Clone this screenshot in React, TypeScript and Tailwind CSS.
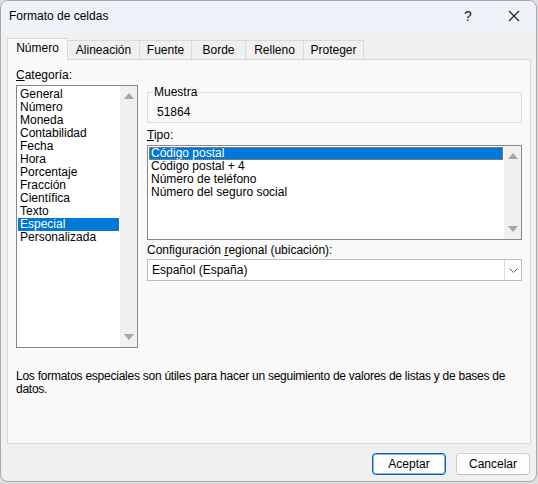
import React from "react";

const CATEGORIES = [
  "General", "Número", "Moneda", "Contabilidad", "Fecha", "Hora",
  "Porcentaje", "Fracción", "Científica", "Texto", "Especial", "Personalizada",
];

const TIPOS = [
  "Código postal",
  "Código postal + 4",
  "Número de teléfono",
  "Número del seguro social",
];

const TABS = [
  { name: "Número", w: "w-[61px]" },
  { name: "Alineación", w: "w-[73px]" },
  { name: "Fuente", w: "w-[53px]" },
  { name: "Borde", w: "w-[55px]" },
  { name: "Relleno", w: "w-[59px]" },
  { name: "Proteger", w: "w-[61px]" },
];

function Arrow({ down }: { down?: boolean }) {
  return (
    <svg width="10" height="6" viewBox="0 0 10 6">
      {down ? (
        <polygon points="0,0 10,0 5,6" fill="#a6a6a6" />
      ) : (
        <polygon points="0,6 10,6 5,0" fill="#a6a6a6" />
      )}
    </svg>
  );
}

function ScrollTrack() {
  return (
    <div className="w-[17px] bg-[#f0f0f0] flex flex-col items-center justify-between py-[7px]">
      <Arrow />
      <Arrow down />
    </div>
  );
}

export default function App() {
  return (
    <div className="w-[538px] h-[484px] bg-[#dedede] font-['Liberation_Sans',Arial,sans-serif] text-[12px] text-black leading-[13px]">
      <div className="w-[537px] h-[482px] bg-[#f0f0f0] border border-[#a8a8a8] rounded-[8px] overflow-hidden flex flex-col">
        {/* title bar */}
        <div className="h-[30px] bg-[#eef2f9] flex items-center pl-[8px] shrink-0">
          <span className="flex-1 text-[12px] pt-[1px]">Formato de celdas</span>
          <span className="w-[20px] text-center text-[14px] text-[#222] mr-[30px]">?</span>
          <svg width="12" height="12" viewBox="0 0 12 12" className="mr-[16px]">
            <path d="M1 1 L11 11 M11 1 L1 11" stroke="#1b1b1b" strokeWidth="1.1" />
          </svg>
        </div>

        {/* tabs */}
        <div className="h-[28px] flex items-end pl-[6px] shrink-0">
          {TABS.map((t, i) =>
            i === 0 ? (
              <div
                key={t.name}
                className={`${t.w} h-[22px] relative z-10 -mb-px bg-[#f9f9f9] border-l border-t border-r border-[#d9d9d9] flex items-center justify-center pb-[2px]`}
              >
                {t.name}
              </div>
            ) : (
              <div
                key={t.name}
                className={`${t.w} h-[19px] -ml-px border-l border-t border-r border-[#d9d9d9] bg-[#f0f0f0] flex items-center justify-center`}
              >
                {t.name}
              </div>
            )
          )}
        </div>

        {/* panel */}
        <div className="w-[524px] h-[385px] ml-[6px] bg-[#f9f9f9] border border-[#d9d9d9] shrink-0 pl-[8px]">
          <div className="flex">
            {/* left column */}
            <div className="w-[122px] pt-[9px]">
              <div className="h-[13px]">
                <span className="underline">C</span>ategoría:
              </div>
              <div className="mt-[3px] h-[263px] bg-white border border-[#828790] flex">
                <div className="flex-1 pt-[2px] px-[1px]">
                  {CATEGORIES.map((c) => (
                    <div
                      key={c}
                      className={`h-[13px] pl-[2px] whitespace-nowrap ${c === "Especial" ? "bg-[#0078d7] text-white" : ""}`}
                    >
                      {c}
                    </div>
                  ))}
                </div>
                <ScrollTrack />
              </div>
            </div>

            {/* right column */}
            <div className="w-[375px] ml-[9px] pt-[26px]">
              <fieldset className="border border-[#dcdcdc] px-[9px] pb-[3px]">
                <legend className="ml-[-4px] px-[1px] leading-[13px]">Muestra</legend>
                <div className="pt-[7px] h-[20px]">51864</div>
              </fieldset>

              <div className="mt-[6px] h-[13px]">
                <span className="underline">T</span>ipo:
              </div>
              <div className="mt-[3px] h-[95px] bg-white border border-[#828790] flex">
                <div className="flex-1 pt-[1px] px-[1px]">
                  {TIPOS.map((t, i) => (
                    <div
                      key={t}
                      className={`h-[13px] pl-[2px] whitespace-nowrap ${i === 0 ? "bg-[#0078d7] text-white outline outline-1 outline-dotted outline-[#d9822b] -outline-offset-1" : ""}`}
                    >
                      {t}
                    </div>
                  ))}
                </div>
                <ScrollTrack />
              </div>

              <div className="mt-[4px] h-[13px]">
                Configuración <span className="underline">r</span>egional (ubicación):
              </div>
              <div className="mt-[2px] h-[22px] bg-white border border-[#bdbdbd] flex items-center pl-[4px]">
                <span className="flex-1">Español (España)</span>
                <div className="w-[17px] h-[20px] border-l border-[#dadada] flex items-center justify-center">
                  <svg width="9" height="5" viewBox="0 0 9 5">
                    <path d="M0.5 0.5 L4.5 4.5 L8.5 0.5" fill="none" stroke="#606060" strokeWidth="1" />
                  </svg>
                </div>
              </div>
            </div>
          </div>

          <p className="mt-[22px] whitespace-nowrap tracking-[-0.25px]">
            Los formatos especiales son útiles para hacer un seguimiento de valores de listas y de bases de
            <br />
            datos.
          </p>
        </div>

        {/* buttons */}
        <div className="flex justify-end gap-[10px] mt-[9px] mr-[6px]">
          <button className="w-[74px] h-[22px] rounded-[4px] bg-[#fdfdfd] border border-[#005fb8] shadow-[inset_0_0_0_1px_rgba(0,95,184,0.45)]">
            Aceptar
          </button>
          <button className="w-[74px] h-[22px] rounded-[4px] bg-[#fdfdfd] border border-[#d0d0d0] border-b-[#bcbcbc]">
            Cancelar
          </button>
        </div>
      </div>
    </div>
  );
}
